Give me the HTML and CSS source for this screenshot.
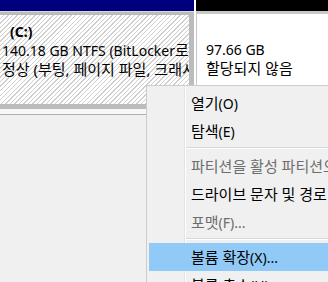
FILE: index.html
```html
<!DOCTYPE html>
<html lang="ko">
<head>
<meta charset="utf-8">
<title>디스크 관리</title>
<link rel="stylesheet" href="styles.css">
</head>
<body>
<div class="disk">
  <div class="vol vol-c">
    <div class="bar bar-primary"></div>
    <div class="frame frame-sel">
      <div class="content hatch">
        <div class="line name"><span class="lat">(C:)</span></div>
        <div class="line"><span class="lat">140.18 GB NTFS (BitLocker</span>로 암호화됨)</div>
        <div class="line">정상 (부팅, 페이지 파일, 크래시 덤프, 주 파티션)</div>
      </div>
    </div>
  </div>
  <div class="gap"></div>
  <div class="vol vol-u">
    <div class="bar bar-unalloc"></div>
    <div class="frame">
      <div class="content plain">
        <div class="line name"></div>
        <div class="line"><span class="lat">97.66 GB</span></div>
        <div class="line">할당되지 않음</div>
      </div>
    </div>
  </div>
</div>

<div class="menu">
  <div class="item">열기<span class="lat">(O)</span></div>
  <div class="item">탐색<span class="lat">(E)</span></div>
  <div class="sep"></div>
  <div class="item disabled">파티션을 활성 파티션으로 표시<span class="lat">(M)</span></div>
  <div class="item">드라이브 문자 및 경로 변경<span class="lat">(C)...</span></div>
  <div class="item disabled">포맷<span class="lat">(F)...</span></div>
  <div class="sep"></div>
  <div class="item active">볼륨 확장<span class="lat">(X)...</span></div>
  <div class="item">볼륨 축소<span class="lat">(H)...</span></div>
</div>
</body>
</html>
```

FILE: styles.css
```css
html, body {
  margin: 0;
  padding: 0;
  background: #f0f0f0;
  font-family: "Noto Sans", "Noto Sans CJK KR", sans-serif;
  font-size: 15px;
  color: #000;
  overflow: hidden;
  width: 328px;
  height: 282px;
}

.lat {
  font-size: 14px;
}

.disk {
  display: flex;
  height: 109px;
  background: #f7f7f7;
  border-bottom: 1px solid #b0b0b0;
  padding-bottom: 5px;
}

.vol {
  display: flex;
  flex-direction: column;
}

.vol-c {
  width: 194px;
}

.gap {
  width: 2px;
  background: #ffffff;
}

.vol-u {
  flex: 1;
}

.bar {
  height: 11px;
  flex: none;
}

.bar-primary {
  background: #00007f;
}

.bar-unalloc {
  background: #000000;
}

.frame {
  flex: 1;
  display: flex;
  border-top: 1px solid #d8d8d8;
  background: #c4c4c4;
  padding: 3px 0 0 0;
}

.frame-sel {
  padding: 3px 5px 5px 0;
  background: #bcbcbc;
}

.vol-u .frame {
  border-top: 1px solid #c8c8c8;
  background: #ffffff;
  border-left: 1px solid #c8c8c8;
  padding: 0;
}

.content {
  flex: 1;
  overflow: hidden;
  white-space: nowrap;
  padding-top: 7px;
}

.hatch {
  background-color: #ffffff;
  background-image: repeating-linear-gradient(135deg, #ffffff 0, #ffffff 2.2px, #cfcfcf 2.2px, #cfcfcf 3.2px);
  padding-left: 2px;
}

.plain {
  background: #ffffff;
  border-top: 2px solid #c8c8c8;
  padding-left: 9px;
  padding-top: 7px;
}

.line {
  height: 19px;
  line-height: 19px;
}

.name {
  font-weight: bold;
  padding-left: 8px;
}

.menu {
  position: absolute;
  left: 146px;
  top: 85px;
  width: 200px;
  height: 210px;
  background: #f0f0f0;
  border: 1px solid #cccccc;
  padding: 3px 0 0 2px;
  background-image: linear-gradient(to right, transparent 37px, #e3e3e3 37px, #e3e3e3 38px, #ffffff 38px, #ffffff 39px, transparent 39px);
  background-repeat: no-repeat;
}

.item {
  height: 28px;
  line-height: 28px;
  padding-left: 42px;
  white-space: nowrap;
}

.item.disabled {
  color: #6d6d6d;
}

.item.active {
  background: #91c9f7;
}

.sep {
  height: 7px;
  margin-left: 37px;
  background: linear-gradient(#f0f0f0 2px, #d7d7d7 2px, #d7d7d7 3px, #ffffff 3px, #ffffff 4px, #f0f0f0 4px);
}
```
